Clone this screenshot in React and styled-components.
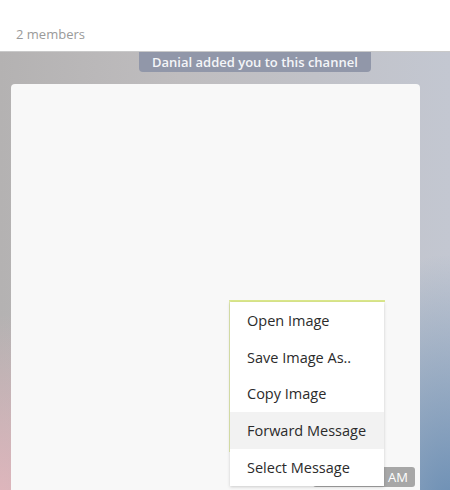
import styled, { createGlobalStyle } from "styled-components";

const GlobalStyle = createGlobalStyle`
  html, body {
    margin: 0;
    padding: 0;
    width: 450px;
    height: 490px;
    overflow: hidden;
    font-family: "Open Sans", "Liberation Sans", sans-serif;
  }
`;

const Page = styled.div`
  display: flex;
  flex-direction: column;
  width: 450px;
  height: 490px;
  overflow: hidden;
`;

const Header = styled.div`
  height: 52px;
  flex-shrink: 0;
  background: #fff;
  display: flex;
  align-items: flex-end;
  padding: 0 0 8px 16px;
  box-sizing: border-box;
  border-bottom: 1px solid #c9c9c9;
`;

const Members = styled.span`
  font-size: 13px;
  color: #9a9a9a;
`;

const ChatArea = styled.div`
  flex: 1;
  display: flex;
  flex-direction: column;
  background:
    radial-gradient(ellipse 110px 200px at 0% 100%, rgba(232, 182, 190, 0.9), rgba(232, 182, 190, 0) 100%),
    radial-gradient(ellipse 150px 260px at 100% 100%, rgba(100, 138, 178, 0.95), rgba(100, 138, 178, 0) 100%),
    linear-gradient(90deg, #b4b2b2 0%, #bfbdbf 40%, #c3c7d1 100%);
`;

const ServiceMessage = styled.div`
  align-self: flex-start;
  margin-left: 139px;
  height: 20px;
  padding: 0 13px;
  display: flex;
  align-items: center;
  background: #9197a9;
  border-radius: 0 0 4px 4px;
  color: #f4f5f8;
  font-size: 13px;
  font-weight: 600;
`;

const PhotoCard = styled.div`
  position: relative;
  margin: 12px 0 0 11px;
  width: 409px;
  height: 430px;
  background: #f8f8f8;
  border-radius: 4px;
`;

const TimeBadge = styled.div`
  position: absolute;
  right: 5px;
  top: 383px;
  width: 102px;
  height: 20px;
  padding-right: 7px;
  box-sizing: border-box;
  display: flex;
  align-items: center;
  justify-content: flex-end;
  background: rgba(140, 140, 140, 0.75);
  border-radius: 3px;
  color: #fff;
  font-size: 13px;
`;

const EdgeLine = styled.div`
  position: absolute;
  left: 218px;
  top: 216px;
  width: 154px;
  height: 150px;
  border-top: 2px solid #dbe88c;
  border-left: 2px solid #e2eab0;
`;

const Menu = styled.ul`
  position: absolute;
  left: 219px;
  top: 218px;
  width: 154px;
  margin: 0;
  padding: 0;
  list-style: none;
  background: #fff;
  box-shadow: 0 1px 3px rgba(0, 0, 0, 0.18);
`;

const MenuItem = styled.li`
  height: 36.8px;
  display: flex;
  align-items: center;
  padding-left: 17px;
  font-size: 14.5px;
  color: #2b2b2b;
  background: ${(p) => (p.$active ? "#f2f2f2" : "#fff")};
`;

const items = ["Open Image", "Save Image As..", "Copy Image", "Forward Message", "Select Message"];

export default function App() {
  return (
    <Page>
      <GlobalStyle />
      <Header>
        <Members>2 members</Members>
      </Header>
      <ChatArea>
        <ServiceMessage>Danial added you to this channel</ServiceMessage>
        <PhotoCard>
          <EdgeLine />
          <TimeBadge>AM</TimeBadge>
          <Menu>
            {items.map((label) => (
              <MenuItem key={label} $active={label === "Forward Message"}>
                {label}
              </MenuItem>
            ))}
          </Menu>
        </PhotoCard>
      </ChatArea>
    </Page>
  );
}
